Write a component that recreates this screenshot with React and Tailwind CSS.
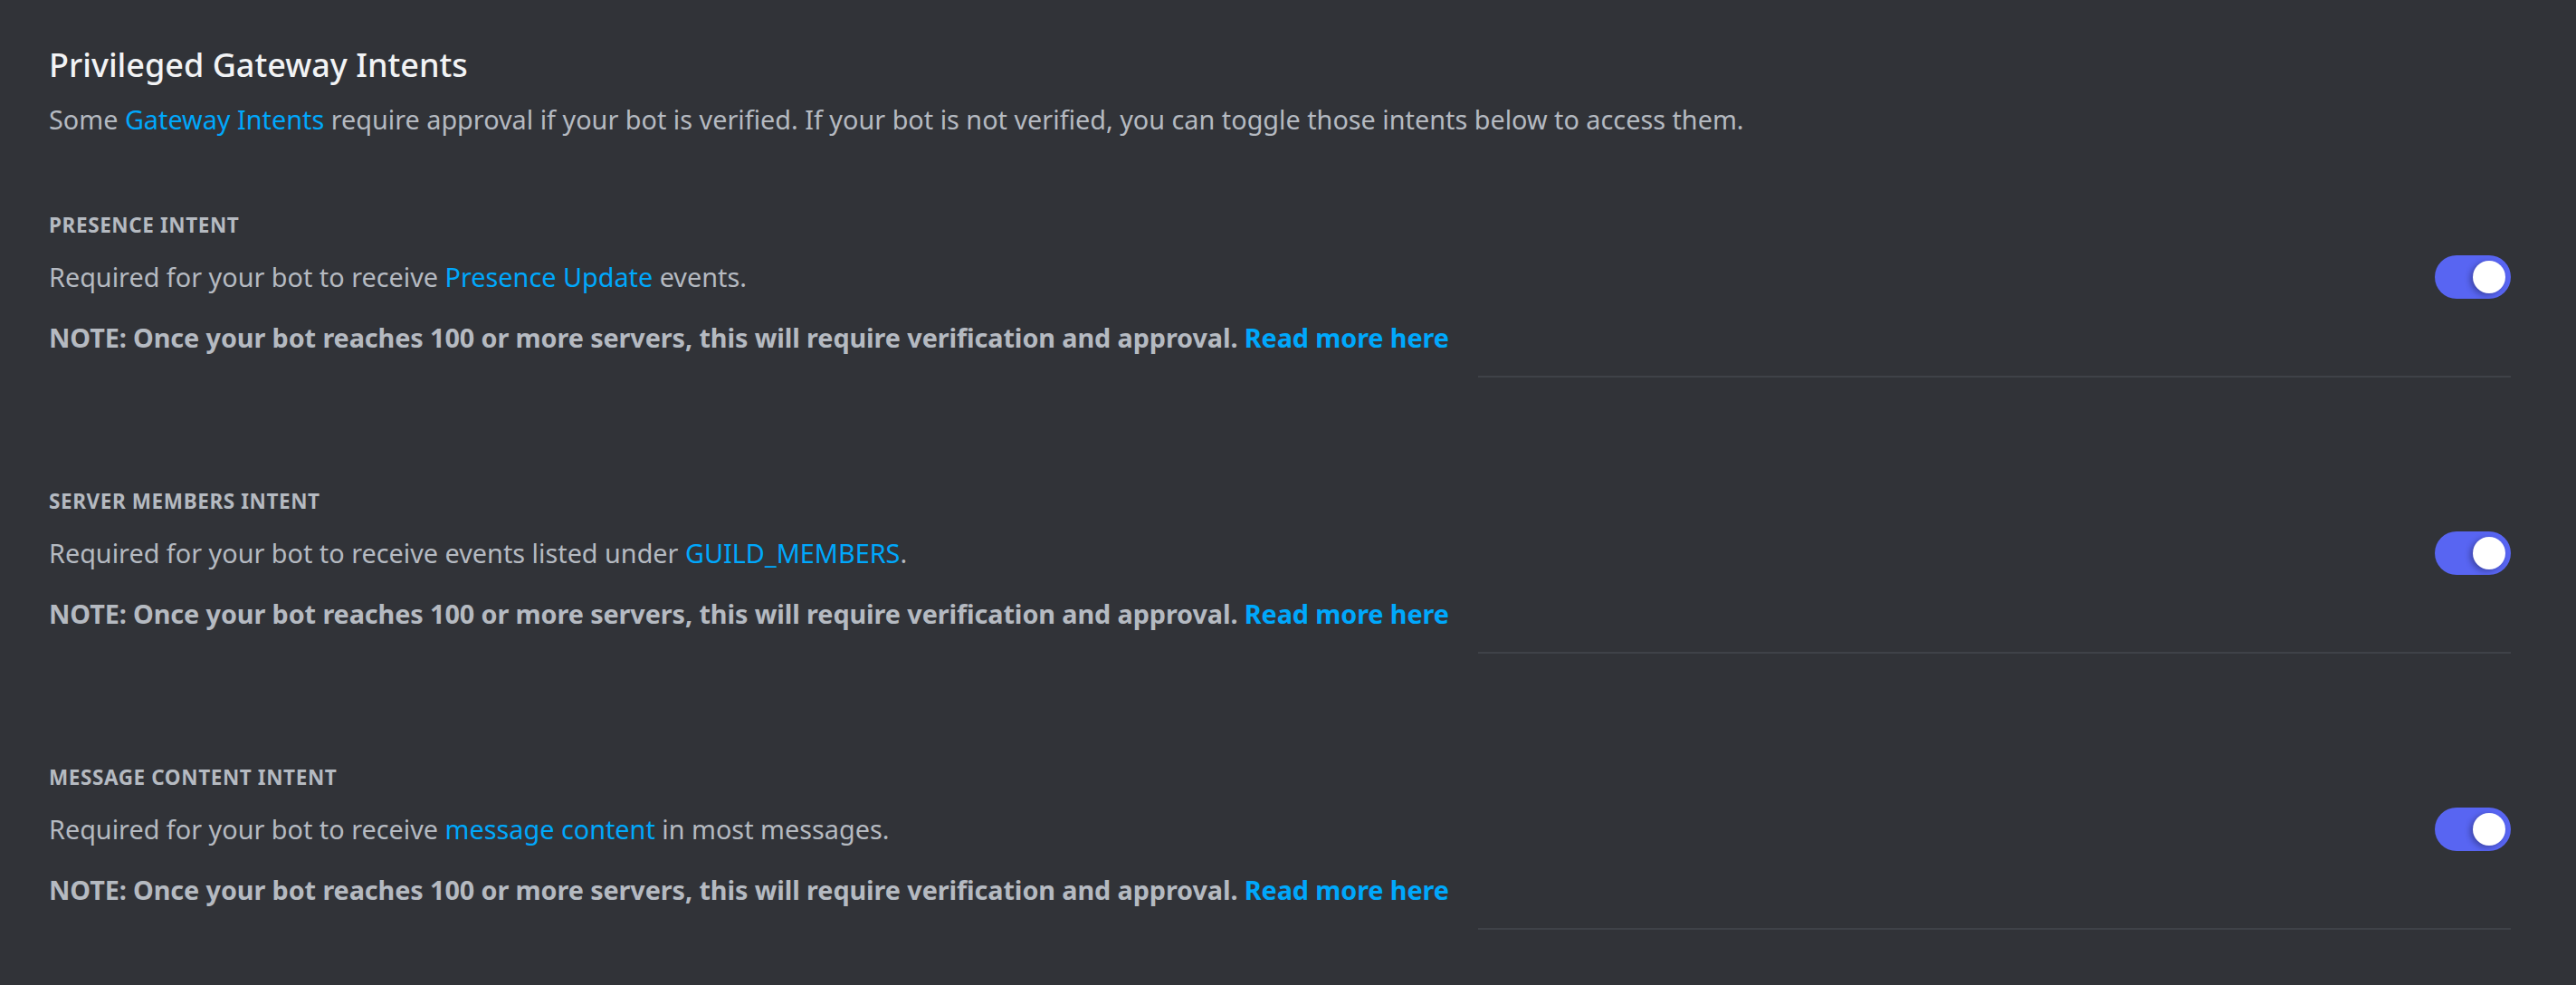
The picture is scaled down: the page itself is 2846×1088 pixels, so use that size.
const intents = [
  {
    label: "PRESENCE INTENT",
    before: "Required for your bot to receive ",
    link: "Presence Update",
    after: " events.",
  },
  {
    label: "SERVER MEMBERS INTENT",
    before: "Required for your bot to receive events listed under ",
    link: "GUILD_MEMBERS",
    after: ".",
  },
  {
    label: "MESSAGE CONTENT INTENT",
    before: "Required for your bot to receive ",
    link: "message content",
    after: " in most messages.",
  },
];

function Toggle() {
  return (
    <div className="flex h-[48px] w-[84px] shrink-0 items-center justify-end rounded-full bg-[#5865f2] pr-[6px]">
      <div className="h-[36px] w-[36px] rounded-full bg-white shadow-[-3px_2px_6px_rgba(0,0,0,0.3)]" />
    </div>
  );
}

function IntentSection({ intent }) {
  return (
    <section className="flex flex-col">
      <h3 className="text-[22.5px] font-bold leading-[28px] tracking-[0.6px] text-[#b5bac1]">{intent.label}</h3>
      <div className="mt-[19px] flex items-center justify-between">
        <p className="text-[28.8px] leading-[40px] text-[#b5bac1]">
          {intent.before}
          <a className="text-[#00a8fc]">{intent.link}</a>
          {intent.after}
        </p>
        <Toggle />
      </div>
      <p className="mt-[23px] text-[28.8px] font-bold leading-[40px] tracking-[-0.1px] text-[#b5bac1]">
        NOTE: Once your bot reaches 100 or more servers, this will require verification and approval.{" "}
        <a className="text-[#00a8fc]">Read more here</a>
      </p>
      <div className="mt-[22px] h-[2px] w-[1141px] self-end bg-[#3f4248]" />
    </section>
  );
}

export default function App() {
  return (
    <div className="min-h-screen w-full bg-[#313338] pl-[54px] pr-[72px] pt-[50px] font-['Noto_Sans',sans-serif]">
      <h2 className="text-[36px] font-medium leading-[44px] text-[#f2f3f5]">Privileged Gateway Intents</h2>
      <p className="mt-[18px] text-[28.8px] leading-[40px] text-[#b5bac1]">
        Some <a className="text-[#00a8fc]">Gateway Intents</a> require approval if your bot is verified. If your bot is not verified, you can toggle those intents below to access them.
      </p>
      <div className="mt-[83px] flex flex-col gap-[123px]">
        {intents.map((intent) => (
          <IntentSection key={intent.label} intent={intent} />
        ))}
      </div>
    </div>
  );
}
